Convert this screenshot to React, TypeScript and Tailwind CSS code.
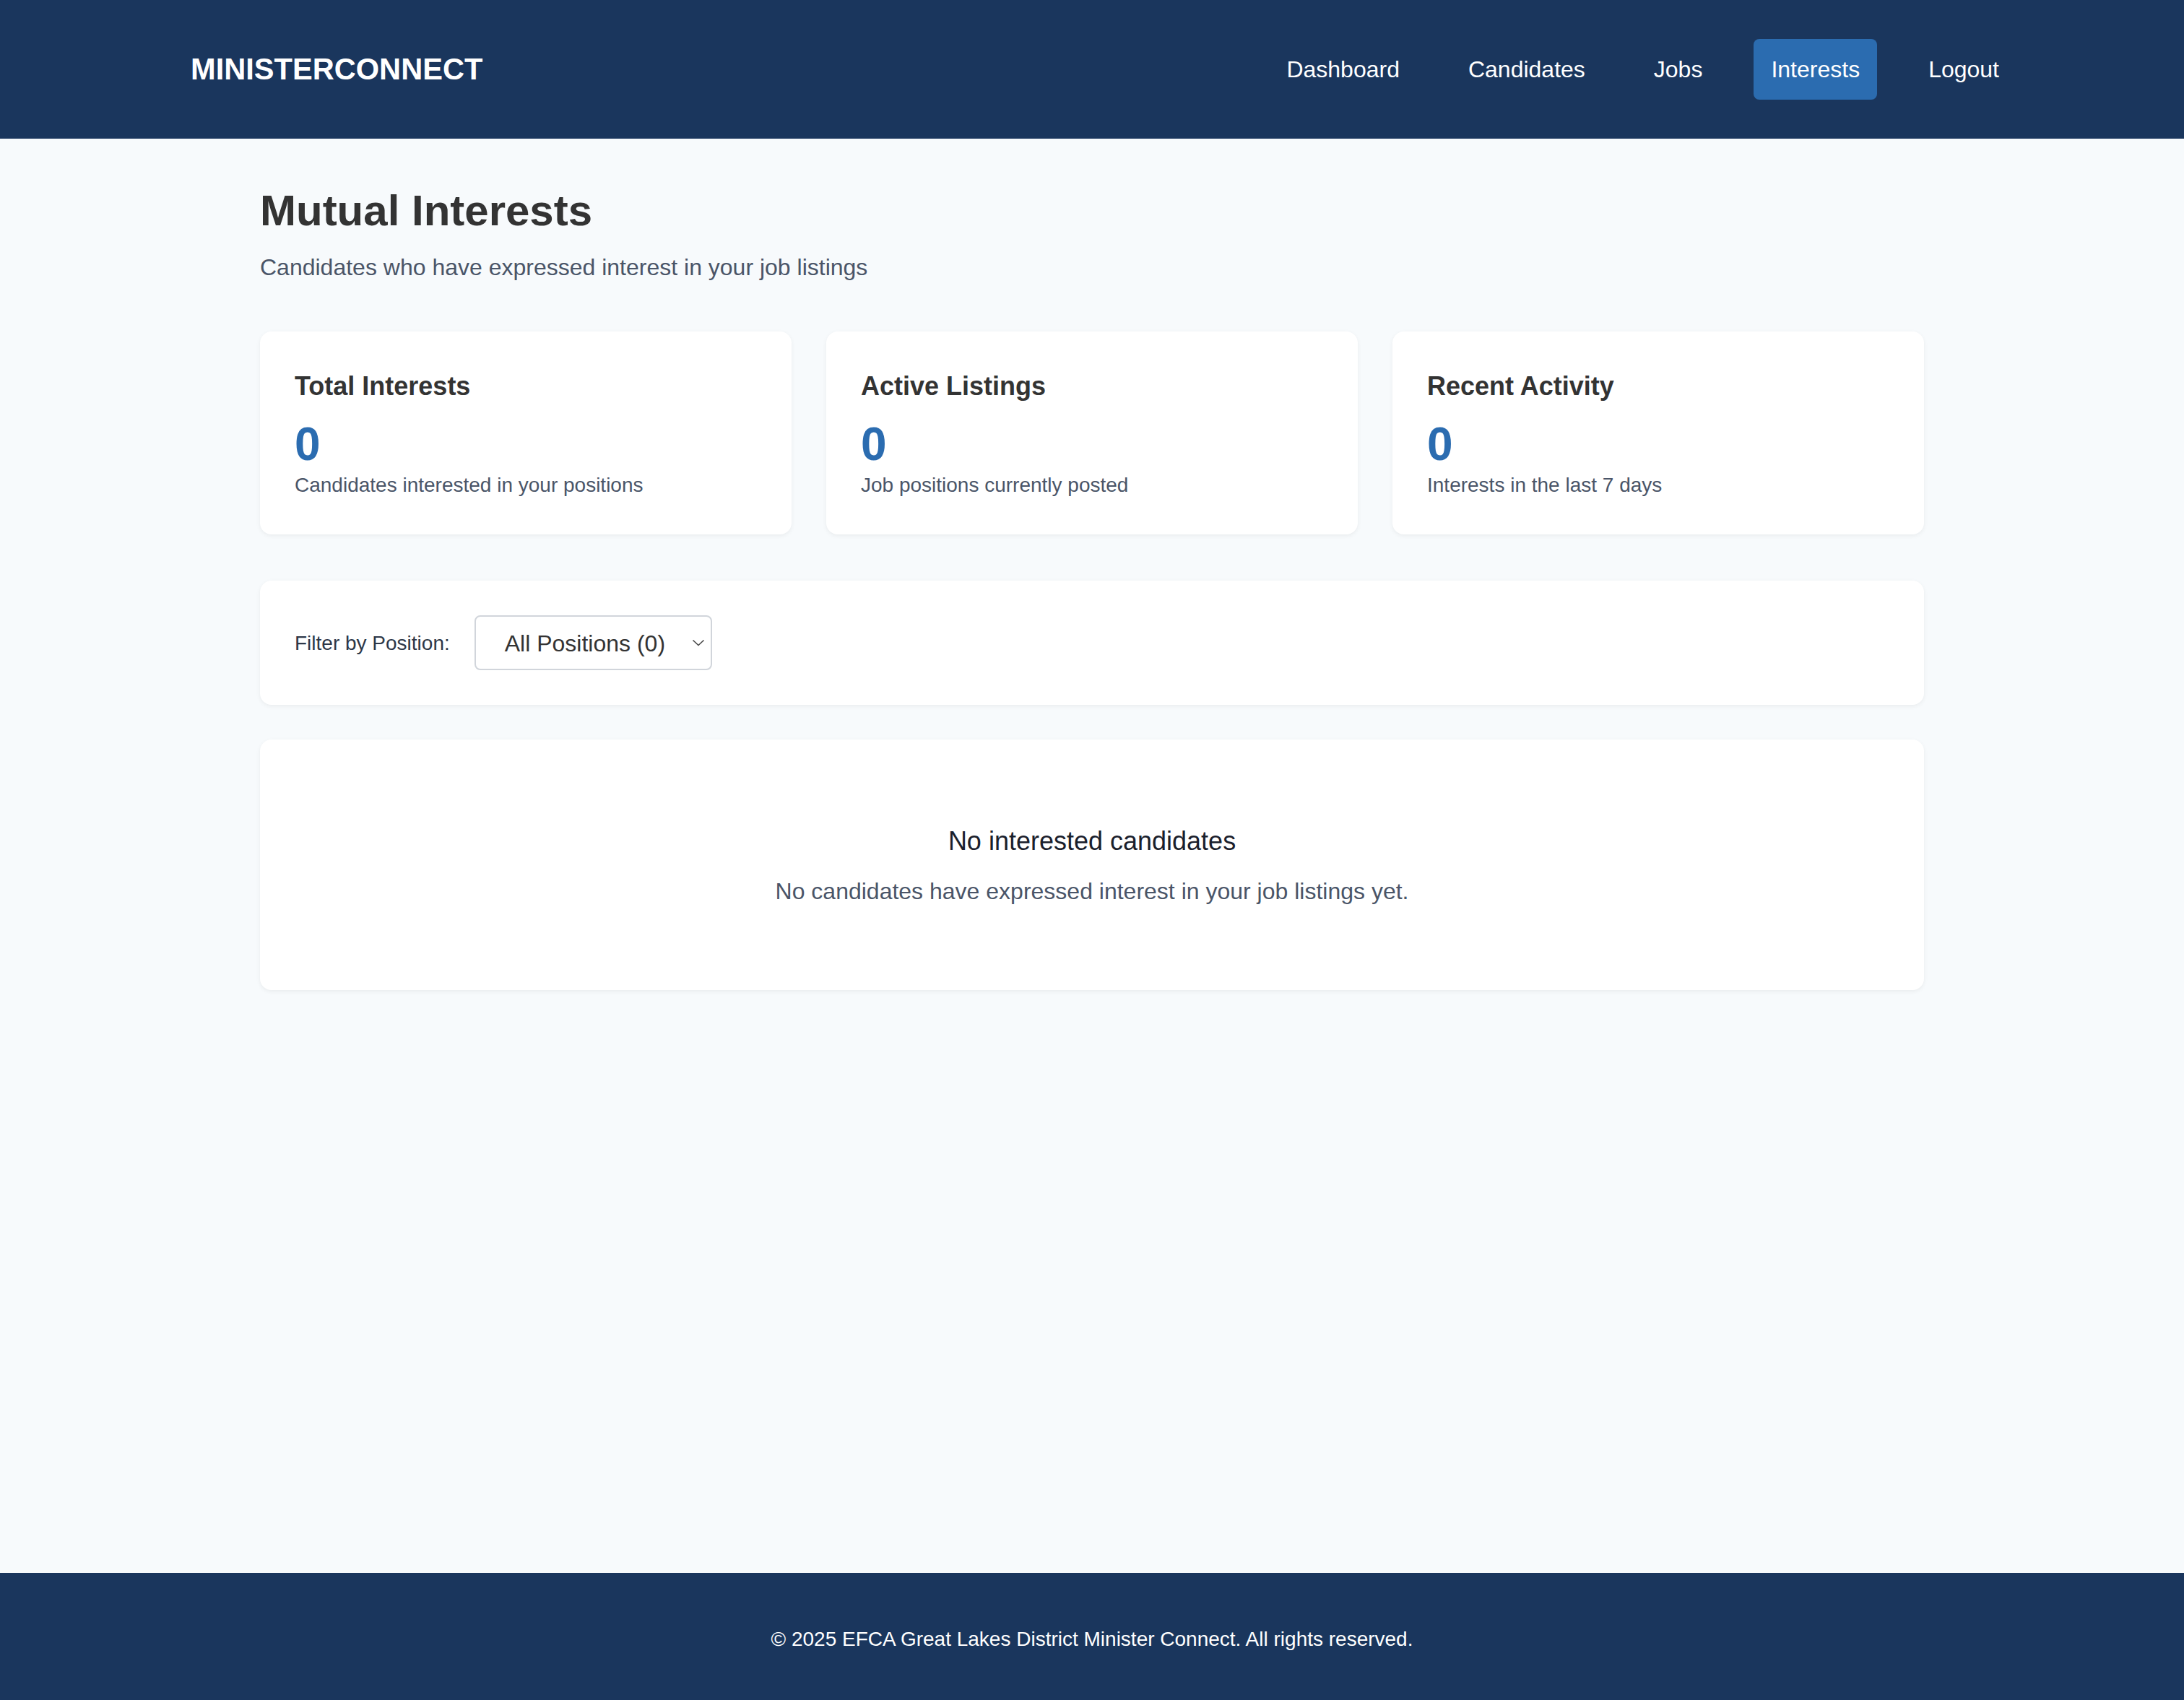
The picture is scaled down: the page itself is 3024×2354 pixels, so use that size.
import React from 'react';

const navLinks = ['Dashboard', 'Candidates', 'Jobs', 'Interests', 'Logout'];

const stats = [
  { title: 'Total Interests', value: 0, note: 'Candidates interested in your positions' },
  { title: 'Active Listings', value: 0, note: 'Job positions currently posted' },
  { title: 'Recent Activity', value: 0, note: 'Interests in the last 7 days' },
];

const Header: React.FC = () => (
  <header className="bg-[#1a365d] h-[192px] flex items-center justify-between pl-[264px] pr-[232px]">
    <div className="text-white font-bold text-[41.6px] leading-[62px]">MINISTERCONNECT</div>
    <nav className="flex items-center gap-[47px]">
      {navLinks.map((link) => (
        <a
          key={link}
          className={
            link === 'Interests'
              ? 'px-6 py-[18px] text-[32px] leading-[48px] text-white rounded-[8px] bg-[#2b6cb0]'
              : 'px-6 py-[18px] text-[32px] leading-[48px] text-white rounded-[8px]'
          }
        >
          {link}
        </a>
      ))}
    </nav>
  </header>
);

const StatCard: React.FC<{ title: string; value: number; note: string }> = ({ title, value, note }) => (
  <div className="bg-white rounded-[16px] shadow-[0_2px_6px_rgba(0,0,0,0.06)] px-12 pt-[49px] pb-[47px]">
    <h3 className="text-[36px] leading-[54px] font-bold text-[#333333]">{title}</h3>
    <div className="mt-[21px] text-[64px] leading-[64px] font-bold text-[#2b6cb0]">{value}</div>
    <p className="mt-[4px] text-[28px] leading-[42px] text-[#4a5568]">{note}</p>
  </div>
);

export default function App() {
  return (
    <div className="min-h-screen flex flex-col bg-[#f7fafc] font-['Liberation_Sans',Arial,sans-serif]">
      <Header />

      <main className="flex-1 w-[2304px] mx-auto pt-16">
        <h1 className="text-[60px] leading-[72px] font-bold text-[#333333]">Mutual Interests</h1>
        <p className="mt-[18px] text-[32px] leading-[48px] text-[#4a5568]">
          Candidates who have expressed interest in your job listings
        </p>

        {/* stats row */}
        <div className="mt-[65px] grid grid-cols-3 gap-12">
          {stats.map((s) => (
            <StatCard key={s.title} {...s} />
          ))}
        </div>

        {/* filter */}
        <div className="mt-16 bg-white rounded-[16px] shadow-[0_2px_6px_rgba(0,0,0,0.06)] px-12 py-12 flex items-center gap-[34px]">
          <label className="pt-[2px] text-[28px] leading-[42px] text-[#2d3748]">Filter by Position:</label>
          <div className="w-[329px] h-[76px] border-2 border-[#d1d5db] rounded-[8px] bg-white flex items-center justify-between pl-[40px] pr-[8px]">
            <span className="pt-[2px] text-[32px] leading-[48px] text-[#333333]">All Positions (0)</span>
            <svg width="18" height="10" viewBox="0 0 18 10" fill="none">
              <path d="M1.5 1.5 L9 8.5 L16.5 1.5" stroke="#444444" strokeWidth="1.6" />
            </svg>
          </div>
        </div>

        {/* empty state */}
        <div className="mt-12 bg-white rounded-[16px] shadow-[0_2px_6px_rgba(0,0,0,0.06)] pt-[114px] pb-[113px] text-center">
          <h3 className="text-[36px] leading-[54px] text-[#1a202c]">No interested candidates</h3>
          <p className="mt-[18px] text-[32px] leading-[48px] text-[#4a5568]">
            No candidates have expressed interest in your job listings yet.
          </p>
        </div>
      </main>

      <footer className="bg-[#1a365d] pt-[71px] pb-[63px] text-center">
        <p className="text-[28px] leading-[42px] text-white">
          © 2025 EFCA Great Lakes District Minister Connect. All rights reserved.
        </p>
      </footer>
    </div>
  );
}
